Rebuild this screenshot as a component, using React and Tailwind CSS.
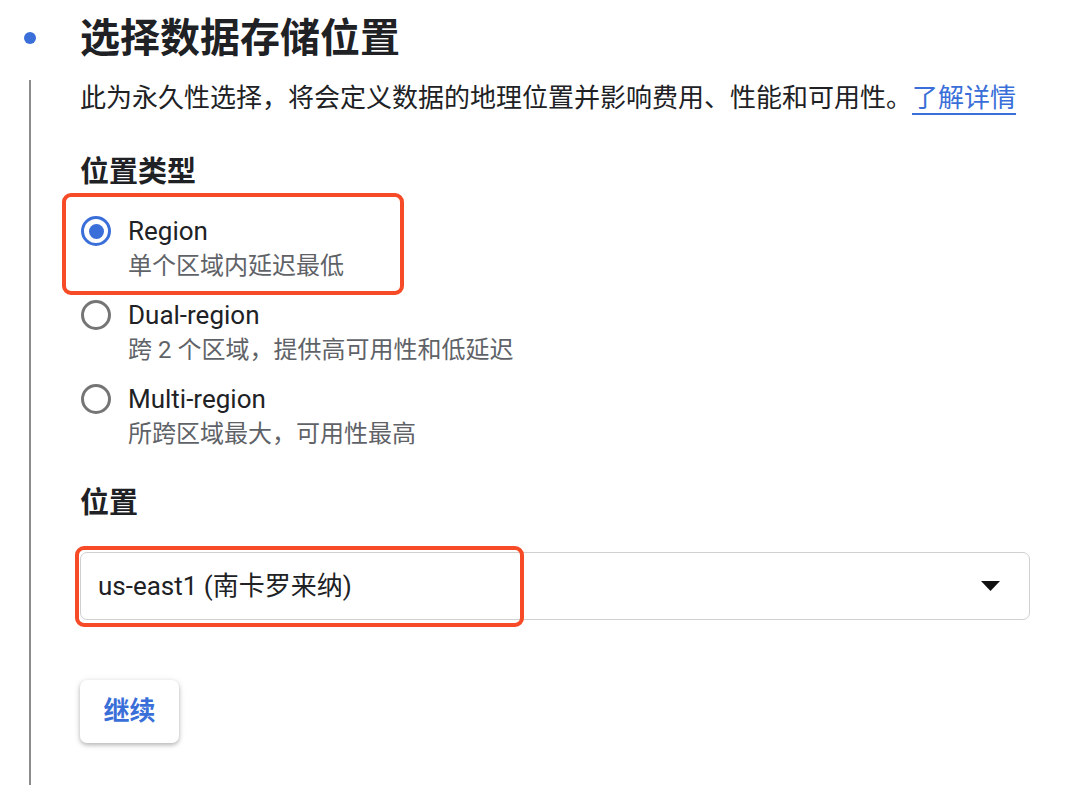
const FONT = { fontFamily: 'Roboto, "Noto Sans CJK SC", "Noto Sans", sans-serif' };

const OPTIONS = [
  { label: 'Region', desc: '单个区域内延迟最低', checked: true },
  { label: 'Dual-region', desc: '跨 2 个区域，提供高可用性和低延迟' },
  { label: 'Multi-region', desc: '所跨区域最大，可用性最高' },
];

function Radio({ checked }) {
  return (
    <span
      className={
        'flex h-[30px] w-[30px] shrink-0 items-center justify-center rounded-full border-[3px] ' +
        (checked ? 'border-[#3a6fd9]' : 'border-[#757575]')
      }
    >
      {checked && <span className="h-[15px] w-[15px] rounded-full bg-[#3a6fd9]" />}
    </span>
  );
}

function Option({ label, desc, checked }) {
  return (
    <div className="relative flex flex-col">
      <div className="flex h-[32px] items-center gap-[17px] pl-px">
        <Radio checked={checked} />
        <span className="text-[26px] leading-[32px] text-[#202124]">{label}</span>
      </div>
      <div className="mt-[3px] pl-[48px] text-[24px] leading-[32px] text-[#5f6368]">{desc}</div>
      {/* red annotation box */}
      {checked && (
        <div className="pointer-events-none absolute -left-[18px] -top-[22px] h-[102px] w-[342px] rounded-[9px] border-[4px] border-[#f74a26]" />
      )}
    </div>
  );
}

export default function App() {
  return (
    <div className="flex h-[794px] w-[1080px] overflow-hidden bg-white" style={FONT}>
      {/* step rail */}
      <div className="flex w-[60px] shrink-0 flex-col items-center pb-[9px] pt-[32px]">
        <span className="h-[12px] w-[12px] rounded-full bg-[#3a6fd9]" />
        <span className="mt-[36px] w-[2px] flex-1 bg-[#8c8c8c]" />
      </div>

      <div className="flex flex-1 flex-col pl-[20px] pt-[13px]">
        <h1 className="text-[40px] font-bold leading-[52px] text-[#202124]">选择数据存储位置</h1>
        <p className="mt-[15px] text-[26px] leading-[36px] text-[#202124]">
          此为永久性选择，将会定义数据的地理位置并影响费用、性能和可用性。
          <a className="text-[#3a6fd9] underline decoration-2 underline-offset-[6px]">了解详情</a>
        </p>

        <h2 className="mt-[36px] text-[29px] font-bold leading-[40px] text-[#202124]">位置类型</h2>
        <div className="mt-[23px] flex flex-col gap-[17px]">
          {OPTIONS.map((o) => (
            <Option key={o.label} {...o} />
          ))}
        </div>

        <h2 className="mt-[33px] text-[29px] font-bold leading-[40px] text-[#202124]">位置</h2>
        <div className="relative mt-[29px] flex h-[68px] w-[950px] items-center justify-between rounded-[7px] border border-[#d0d0d0] pl-[17px] pr-[29px]">
          <span className="text-[26px] text-[#202124]">us-east1 (南卡罗来纳)</span>
          <svg width="19" height="10" viewBox="0 0 19 10">
            <path d="M0 0h19L9.5 10z" fill="#111" />
          </svg>
          <div className="pointer-events-none absolute -left-[6px] -top-[7px] h-[81px] w-[449px] rounded-[9px] border-[4px] border-[#f74a26]" />
        </div>

        <button className="mt-[60px] flex h-[63px] w-[99px] items-center justify-center rounded-[7px] bg-white text-[26px] font-bold text-[#3a6fd9] shadow-[0_2px_4px_rgba(0,0,0,0.25),0_1px_8px_rgba(0,0,0,0.08)]">
          继续
        </button>
      </div>
    </div>
  );
}
